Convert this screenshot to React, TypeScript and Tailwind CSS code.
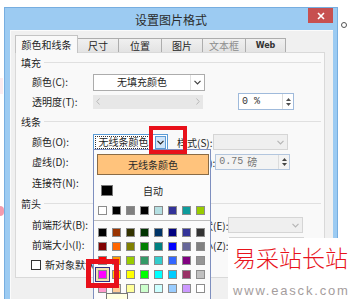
import React from "react";

const Chevron = ({ color = "#404040" }: { color?: string }) => (
  <svg width="7" height="5" viewBox="0 0 7 5">
    <path d="M0.5 0.8 L3.5 3.8 L6.5 0.8" fill="none" stroke={color} strokeWidth="1.2" />
  </svg>
);

const Spin = ({ color = "#505050", border = "#d0d0d0" }: { color?: string; border?: string }) => (
  <div className={`flex flex-col items-center justify-center w-[11px] h-full gap-[2px] border-l`} style={{ borderColor: border }}>
    <svg width="5" height="3" viewBox="0 0 5 3">
      <path d="M0 3 L2.5 0 L5 3Z" fill={color} />
    </svg>
    <svg width="5" height="3" viewBox="0 0 5 3">
      <path d="M0 0 L2.5 3 L5 0Z" fill={color} />
    </svg>
  </div>
);

const DisabledCombo = () => (
  <div className="w-[75px] h-[16px] border border-[#d5d5d5] bg-[#efefef] flex justify-end">
    <div className="w-[13px] flex items-center justify-center">
      <Chevron color="#b5b5b5" />
    </div>
  </div>
);

const Section = ({ title, h }: { title: string; h: string }) => (
  <div className={`${h} flex items-center pl-[5px] pr-[3px] shrink-0`}>
    <span className="leading-none">{title}</span>
    <div className="flex-1 h-[2px] border-t border-[#e0e0e0] border-b-white ml-[3px]" />
  </div>
);

const Label = ({ children, w = "w-[61px]" }: { children: React.ReactNode; w?: string }) => (
  <span className={`${w} shrink-0 leading-none whitespace-nowrap`}>{children}</span>
);

const topRow = ["#ffffff", "#000000", "#808080", "#000000", "#b4dfe2", "#333399", "#0e9c9c", "#99cc00"];
const grid = [
  ["#000000", "#993300", "#333300", "#003300", "#003366", "#000080", "#333399", "#333333"],
  ["#800000", "#ff6600", "#808000", "#008000", "#008080", "#0000ff", "#666699", "#808080"],
  ["#ff0000", "#ff9900", "#99cc00", "#339966", "#33cccc", "#3366ff", "#800080", "#969696"],
  ["#ff00ff", "#ffcc00", "#ffff00", "#00ff00", "#00ffff", "#00ccff", "#993366", "#c0c0c0"],
  ["#ff99cc", "#ffcc99", "#ffff99", "#ccffcc", "#ccffff", "#99ccff", "#cc99ff", "#ffffff"],
];

const Swatch = ({ c }: { c: string }) => (
  <div className="w-[9px] h-[9px] border border-[#8c8c8c] shrink-0" style={{ backgroundColor: c }} />
);

export default function App() {
  const tabs = [
    { t: "颜色和线条", w: "w-[63px]", sel: true },
    { t: "尺寸", w: "w-[42px]" },
    { t: "位置", w: "w-[44px]" },
    { t: "图片", w: "w-[42px]" },
    { t: "文本框", w: "w-[44px]", dis: true },
    { t: "Web", w: "w-[41px]", web: true },
  ];
  return (
    <div className="relative w-[349px] h-[299px] overflow-hidden bg-white text-[10px] text-[#1e1e1e] font-['Noto_Sans_CJK_SC',sans-serif]">
      {/* background doc marks */}
      <div className="absolute left-0 top-[78px] w-[3px] h-[16px] bg-[#fdecef]" />
      <div className="absolute left-0 top-[206px] w-[4px] h-[10px] rounded-r-full bg-[#f39aac]" />
      <div className="absolute left-[341px] top-[22px] w-[6px] h-[6px] rounded-full border border-[#555]" />

      {/* window */}
      <div className="ml-[4px] mt-[7px] w-[334px] h-[292px] bg-[#9ccbf2] border border-b-0 border-[#77aee0] flex flex-col">
        <div className="h-[22px] flex shrink-0">
          <div className="w-[29px]" />
          <div className="flex-1 text-center text-[12px] leading-[23px] text-[#2b2b2b]">设置图片格式</div>
          <div className="w-[25px] h-[15px] bg-[#c75050] flex items-center justify-center mr-[4px]">
            <svg width="8" height="8" viewBox="0 0 8 8">
              <path d="M1 1 L7 7 M7 1 L1 7" stroke="#ffffff" strokeWidth="1.6" />
            </svg>
          </div>
        </div>
        <div className="ml-[5px] mr-[4px] flex-1 bg-[#f0f0f0] border-t border-l border-[#fbfbfb] pt-[4px] pl-[4px]">
          {/* tabs */}
          <div className="h-[17px] flex items-end">
            {tabs.map((tab, i) => (
              <div
                key={tab.t}
                className={`${tab.w} ${i > 0 ? "-ml-px" : ""} ${
                  tab.sel
                    ? "h-[18px] -mb-px relative z-10 bg-[#f9f9f9] border-[#c4c4c4]"
                    : "h-[14px] bg-gradient-to-b from-[#f0f0f0] to-[#e3e3e3] border-[#adadad]"
                } border-t border-l border-r flex items-center justify-center shrink-0`}
              >
                <span
                  className={`leading-none ${tab.dis ? "text-[#8d8d8d]" : ""} ${
                    tab.web ? "text-[8px] font-bold text-[#333] font-['DejaVu_Sans',sans-serif]" : ""
                  }`}
                >
                  {tab.t}
                </span>
              </div>
            ))}
          </div>
          {/* panel */}
          <div className="w-[310px] h-[226px] border border-[#d9d9d9] bg-[#f9f9f9] flex flex-col">
            <Section title="填充" h="h-[19px]" />
            <div className="h-[20px] flex items-center pl-[16px] shrink-0">
              <Label>颜色(C):</Label>
              <div className="w-[112px] h-[17px] border border-[#acacac] bg-white flex">
                <div className="flex-1 flex items-center justify-center leading-none">无填充颜色</div>
                <div className="w-[14px] flex items-center justify-center border-l border-[#e0e0e0]">
                  <Chevron />
                </div>
              </div>
            </div>
            <div className="h-[19px] flex items-center pl-[16px] shrink-0">
              <Label>透明度(T):</Label>
              <div className="w-[110px] h-[14px] bg-[#e7e7e7] flex items-center justify-between px-[3px]">
                <svg width="4" height="7" viewBox="0 0 4 7">
                  <path d="M3.5 0.5 L0.8 3.5 L3.5 6.5" fill="none" stroke="#b8b8b8" strokeWidth="1" />
                </svg>
                <svg width="4" height="7" viewBox="0 0 4 7">
                  <path d="M0.5 0.5 L3.2 3.5 L0.5 6.5" fill="none" stroke="#b8b8b8" strokeWidth="1" />
                </svg>
              </div>
              <div className="ml-[35px] w-[56px] h-[17px] border border-[#9fbadb] bg-white flex">
                <div className="flex-1 flex items-center pl-[3px] leading-none font-['Liberation_Mono',monospace] text-[#333]">0 %</div>
                <Spin border="#dcdcdc" />
              </div>
            </div>
            <Section title="线条" h="h-[21px]" />
            <div className="h-[20px] flex items-center pl-[16px] shrink-0">
              <Label>颜色(O):</Label>
              <div className="w-[75px] h-[17px] border border-[#5b9bd5] bg-white flex items-center p-[1px]">
                <div className="flex-1 h-full border border-dotted border-[#333] flex items-center justify-center leading-none">
                  无线条颜色
                </div>
                <div className="w-[11px] h-full ml-[3px] bg-[#cfe4f8] border border-[#5b9bd5] flex items-center justify-center">
                  <Chevron color="#222" />
                </div>
              </div>
              <div className="ml-[9px]">
                <Label>样式(S):</Label>
              </div>
              <DisabledCombo />
            </div>
            <div className="h-[20px] flex items-center pl-[16px] shrink-0">
              <Label>虚线(D):</Label>
              <div className="w-[75px] h-[16px]" />
              <div className="ml-[9px]">
                <Label>粗细(W):</Label>
              </div>
              <div className="w-[75px] h-[16px] border border-[#b3c6de] bg-[#f3f3f3] flex">
                <div className="flex-1 flex items-center pl-[3px] leading-none text-[#777]">
                  <span className="font-['Liberation_Mono',monospace]">0.75</span>
                  <span className="ml-[4px]">磅</span>
                </div>
                <Spin color="#444" border="#dcdcdc" />
              </div>
            </div>
            <div className="h-[21px] flex items-center pl-[16px] shrink-0">
              <Label>连接符(N):</Label>
            </div>
            <Section title="箭头" h="h-[22px]" />
            <div className="h-[20px] flex items-center pl-[16px] shrink-0">
              <Label>前端形状(B):</Label>
              <div className="w-[75px] h-[16px]" />
              <div className="ml-[5px]">
                <Label w="w-[65px]">末端形状(E):</Label>
              </div>
              <DisabledCombo />
            </div>
            <div className="h-[20px] flex items-center pl-[16px] shrink-0">
              <Label>前端大小(I):</Label>
              <div className="w-[75px] h-[16px]" />
              <div className="ml-[5px]">
                <Label w="w-[65px]">末端大小(Z):</Label>
              </div>
              <DisabledCombo />
            </div>
            <div className="h-[20px] flex items-center pl-[15px] shrink-0">
              <div className="w-[10px] h-[10px] border border-[#333] bg-white" />
              <span className="ml-[4px] leading-none whitespace-nowrap">新对象默认值(F)</span>
            </div>
          </div>
        </div>
      </div>

      {/* color popup */}
      <div className="absolute left-[93px] top-[149px] w-[118px] h-[160px] border border-[#7e8fbf] bg-[#fbfbfb] flex flex-col">
        <div className="mt-[4px] ml-[3px] w-[112px] h-[21px] bg-[#ffc37c] border border-[#8a6b45] flex items-center justify-center leading-none text-[#2a2a2a]">
          无线条颜色
        </div>
        <div className="mt-[10px] h-[11px] flex items-center">
          <div className="ml-[7px] w-[12px] h-[11px] bg-black border border-[#7a7a7a]" />
          <span className="ml-[30px] leading-none">自动</span>
        </div>
        <div className="mt-[10px] flex gap-[5px] pl-[4px]">
          {topRow.map((c, i) => (
            <Swatch key={i} c={c} />
          ))}
        </div>
        <div className="mt-[5px] h-[2px] border-t border-[#bdbdbd] border-b-white" />
        <div className="mt-[6px] flex flex-col gap-[5px]">
          {grid.map((row, r) => (
            <div key={r} className="flex gap-[5px] pl-[4px]">
              {row.map((c, i) =>
                r === 3 && i === 0 ? (
                  <div key={i} className="relative w-[9px] h-[9px] shrink-0">
                    <div className="absolute -inset-[3px] border border-[#303088] bg-[#f2e2b2]" />
                    <div className="relative w-[9px] h-[9px] border border-[#8c8c8c] bg-[#ff00ff]" />
                  </div>
                ) : (
                  <Swatch key={i} c={c} />
                )
              )}
            </div>
          ))}
        </div>
      </div>

      {/* red highlight boxes */}
      <div className="absolute left-[149px] top-[126px] w-[38px] h-[28px] border-[4px] border-[#e8101a]" />
      <div className="absolute left-[86px] top-[259px] w-[33px] h-[29px] border-[5px] border-[#e8101a]" />

      {/* tooltip */}
      <div className="absolute left-[106px] top-[293px] w-[22px] h-[6px] bg-[#ffffe1] border border-b-0 border-[#767676] overflow-hidden" />

      {/* watermark */}
      <div className="absolute left-[228px] top-[238px] w-[121px] h-[61px] bg-white flex flex-col pl-[5px] pt-[8px] overflow-hidden">
        <div className="text-[23px] leading-[23px] font-light text-[#e8141c] whitespace-nowrap">易采站长站</div>
        <div className="mt-[15px] text-[13px] leading-[13px] tracking-[1.8px] text-[#a59d9d] whitespace-nowrap font-['Liberation_Sans',sans-serif]">
          www.easck.com
        </div>
      </div>
    </div>
  );
}
